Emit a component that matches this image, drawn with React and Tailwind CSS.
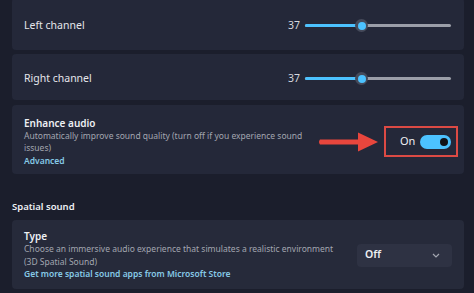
import React from 'react';

const font = { fontFamily: '"Noto Sans", "Open Sans", sans-serif' };

const Slider = ({ value }) => (
  <div className="flex items-center">
    <span className="w-[22px] text-right text-[10.5px] text-[#d6d8de] mr-[5px]">{value}</span>
    <div className="relative w-[146px] h-[3px] rounded-full bg-[#9b9ea8]">
      <div className="absolute left-0 top-0 h-[3px] w-[56px] rounded-full bg-[#4cc2ff]" />
      <div className="absolute left-[50px] top-[-5px] w-[13px] h-[13px] rounded-full bg-[#454a5a] flex items-center justify-center">
        <div className="w-[8px] h-[8px] rounded-full bg-[#4cc2ff]" />
      </div>
    </div>
  </div>
);

const ChannelRow = ({ label, className }) => (
  <div className={`flex items-center justify-between bg-[#242839] rounded-[4px] pl-3 pr-[13px] pt-[3px] ${className}`}>
    <span className="text-[10.5px] text-[#e4e6eb]">{label}</span>
    <Slider value={37} />
  </div>
);

const Arrow = () => (
  <svg width="62" height="22" viewBox="0 0 62 22" className="mr-[4px]">
    <path d="M2 8.5 H40 V1.5 L60 11 L40 20.5 V13.5 H2 Q0 11 2 8.5 Z" fill="#e8463d" />
  </svg>
);

export default function App() {
  return (
    <div className="w-[474px] h-[293px] overflow-hidden bg-[#1b1e2c] pl-3 pr-[10px]" style={font}>
      <ChannelRow label="Left channel" className="h-[52px] mt-[-2px]" />
      <ChannelRow label="Right channel" className="h-[46px] mt-[4px]" />

      {/* Enhance audio */}
      <div className="mt-[5px] h-[69px] bg-[#242839] rounded-[4px] pl-3 pr-[6px] pt-[4px] flex items-center justify-between">
        <div className="w-[290px] leading-[12.5px]">
          <div className="text-[10px] font-semibold text-[#eef0f4] leading-[14px]">Enhance audio</div>
          <div className="text-[8.5px] text-[#a3a6b0]">
            Automatically improve sound quality (turn off if you experience sound issues)
          </div>
          <div className="text-[8.5px] font-semibold text-[#86c9e6]">Advanced</div>
        </div>
        <div className="flex items-center">
          <Arrow />
          <div className="w-[74px] h-[31px] border-2 border-[#dc4a44] flex items-center pl-[14px] pr-[5px] justify-between">
            <span className="text-[11px] text-[#eef0f4]">On</span>
            <div className="w-[31px] h-[14px] rounded-full bg-[#4cc2ff] flex items-center justify-end pr-[3px]">
              <div className="w-[8px] h-[8px] rounded-full bg-[#111319]" />
            </div>
          </div>
        </div>
      </div>

      <div className="mt-[26px] text-[9.5px] font-semibold text-[#eef0f4] leading-[14px]">Spatial sound</div>

      {/* Type */}
      <div className="mt-[6px] h-[69px] bg-[#262a3a] rounded-[4px] pl-3 pr-[12px] pt-[1px] flex items-center justify-between">
        <div className="w-[318px] leading-[12.5px]">
          <div className="text-[10px] font-semibold text-[#eef0f4] leading-[14px]">Type</div>
          <div className="text-[8.5px] text-[#a3a6b0]">
            Choose an immersive audio experience that simulates a realistic environment (3D Spatial Sound)
          </div>
          <div className="text-[8.5px] font-semibold text-[#86c9e6]">Get more spatial sound apps from Microsoft Store</div>
        </div>
        <div className="w-[95px] h-[23px] rounded-[4px] bg-[#2e3243] flex items-center justify-between pl-[8px] pr-[12px]">
          <span className="text-[10.5px] font-semibold text-[#eef0f4]">Off</span>
          <svg width="8" height="5" viewBox="0 0 8 5">
            <path d="M1 1 L4 4 L7 1" stroke="#a3a6b0" strokeWidth="1.2" fill="none" />
          </svg>
        </div>
      </div>
    </div>
  );
}
